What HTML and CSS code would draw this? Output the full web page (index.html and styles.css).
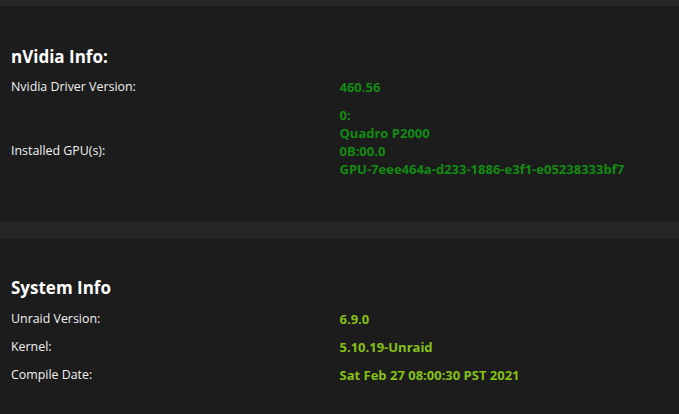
FILE: index.html
```html
<!DOCTYPE html>
<html lang="en">
<head>
    <meta charset="UTF-8">
    <meta name="viewport" content="width=device-width, initial-scale=1.0">
    <title>GPU Statistics - Info</title>
    <link rel="stylesheet" href="styles.css">
</head>
<body>
    <div class="topbar"></div>

    <!-- nVidia section -->
    <div class="section section-nvidia">
        <div class="section-title">nVidia Info:</div>
        <div class="info-row">
            <div class="info-label">Nvidia Driver Version:</div>
            <div class="info-value value-nvidia">460.56</div>
        </div>
        <div class="info-row">
            <div class="info-label">Installed GPU(s):</div>
            <div class="info-value value-nvidia value-multi">
                0:<br>Quadro P2000<br>0B:00.0<br>GPU-7eee464a-d233-1886-e3f1-e05238333bf7<br>&nbsp;
            </div>
        </div>
    </div>

    <div class="divider"></div>

    <!-- System section -->
    <div class="section section-system">
        <div class="section-title">System Info</div>
        <div class="info-row">
            <div class="info-label">Unraid Version:</div>
            <div class="info-value value-system">6.9.0</div>
        </div>
        <div class="info-row">
            <div class="info-label">Kernel:</div>
            <div class="info-value value-system">5.10.19-Unraid</div>
        </div>
        <div class="info-row">
            <div class="info-label">Compile Date:</div>
            <div class="info-value value-system">Sat Feb 27 08:00:30 PST 2021</div>
        </div>
    </div>
</body>
</html>
```

FILE: styles.css
```css
/* Page */
html, body {
    margin: 0;
    padding: 0;
    background-color: #1c1c1c;
    color: #f2f2f2;
    font-family: "Open Sans", "Noto Sans", sans-serif;
    font-size: 12px;
    height: 414px;
    overflow: hidden;
}

/* Strips between sections */
.topbar {
    height: 5px;
    background-color: #262626;
    border-bottom: 1px solid #2b2b2b;
}
.divider {
    height: 16px;
    background-color: #262626;
    border-bottom: 1px solid #2d2d2d;
}

/* Sections */
.section-nvidia {
    padding-bottom: 20px;
}
.section-title {
    font-size: 17px;
    font-weight: bold;
    padding-left: 11px;
    color: #ffffff;
}
.section-nvidia .section-title {
    padding-top: 34px;
    height: 33px;
    line-height: 33px;
}
.section-system .section-title {
    padding-top: 36px;
    height: 31px;
    line-height: 28px;
}

/* Rows */
.info-row {
    display: grid;
    grid-template-columns: 50% 50%;
    align-items: center;
    padding: 5px 0;
}
.info-label {
    padding-left: 11px;
    font-size: 12.4px;
    line-height: 18px;
}
.info-value {
    font-size: 13px;
    font-weight: bold;
    line-height: 18px;
}
.value-nvidia {
    color: #138a13;
}
.value-system {
    color: #86c017;
}
```
